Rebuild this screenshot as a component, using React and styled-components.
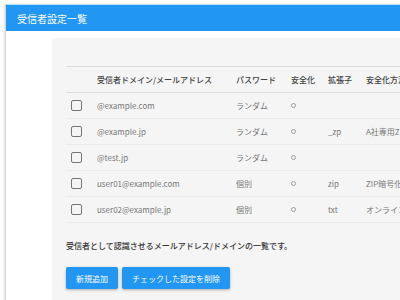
import React from 'react'
import styled, { createGlobalStyle } from 'styled-components'

const GlobalStyle = createGlobalStyle`
  html, body {
    margin: 0;
    padding: 0;
    background: #fff;
    overflow: hidden;
  }
  body {
    font-family: "Noto Sans CJK JP", "Noto Sans", sans-serif;
  }
`

const Page = styled.div`
  width: 400px;
  height: 300px;
  overflow: hidden;
  padding: 4px 0 0 5px;
  box-sizing: border-box;
`

const Panel = styled.section`
  width: 420px;
  height: 320px;
  border-left: 1px solid #d6d6d6;
  box-shadow: -1px 0 2px rgba(0, 0, 0, 0.12);
  display: flex;
  flex-direction: column;
`

const PanelHeader = styled.header`
  height: 26px;
  background: #2196f3;
  border-top: 1px solid #b3e5fc;
  color: #fff;
  font-size: 10px;
  display: flex;
  align-items: center;
  padding-left: 11px;
`

const PanelBody = styled.div`
  flex: 1;
  padding: 7px 0 0 46px;
  background: #fff;
  display: flex;
`

const Content = styled.div`
  flex: 1;
  background: #f5f5f5;
  padding: 28px 0 0 14px;
`

const Table = styled.table`
  border-collapse: collapse;
  table-layout: fixed;
  width: 400px;
  font-size: 8px;
`

const HeadCell = styled.th`
  height: 25px;
  text-align: left;
  font-weight: 500;
  color: #424242;
  padding: 0 0 0 ${p => p.$pad || 8}px;
  border-top: 1px solid #dcdcdc;
  border-bottom: 1px solid #dcdcdc;
  white-space: nowrap;
  overflow: hidden;
`

const Row = styled.tr`
  border-bottom: 1px solid #ebebeb;
`

const Cell = styled.td`
  height: 25px;
  color: #757575;
  padding: 0 0 0 ${p => p.$pad || 8}px;
  white-space: nowrap;
  overflow: hidden;
`

const Circle = styled.span`
  display: block;
  width: 3px;
  height: 3px;
  border: 1px solid #9e9e9e;
  border-radius: 50%;
`

const Check = styled.span`
  display: block;
  width: 9px;
  height: 9px;
  border: 1.5px solid #757575;
  border-radius: 2px;
`

const Note = styled.p`
  margin: 17px 0 0;
  font-size: 8px;
  font-weight: 500;
  color: #333;
`

const Actions = styled.div`
  display: flex;
  gap: 4px;
  margin-top: 16px;
`

const Button = styled.button`
  height: 22px;
  padding: 0 10px;
  border: none;
  border-radius: 2px;
  background: #2196f3;
  color: #fff;
  font-family: inherit;
  font-size: 8px;
  box-shadow: 0 1px 3px rgba(0, 0, 0, 0.3);
`

const rows = [
  { addr: '@example.com', pw: 'ランダム', safe: true, ext: '', method: '' },
  { addr: '@example.jp', pw: 'ランダム', safe: true, ext: '_zp', method: 'A社専用ZIP' },
  { addr: '@test.jp', pw: 'ランダム', safe: true, ext: '', method: '' },
  { addr: 'user01@example.com', pw: '個別', safe: true, ext: 'zip', method: 'ZIP暗号化' },
  { addr: 'user02@example.jp', pw: '個別', safe: true, ext: 'txt', method: 'オンラインストレージ' },
]

export default function App() {
  return (
    <Page>
      <GlobalStyle />
      <Panel>
        <PanelHeader>受信者設定一覧</PanelHeader>
        <PanelBody>
          <Content>
            <Table>
              <colgroup>
                <col style={{ width: 23 }} />
                <col style={{ width: 139 }} />
                <col style={{ width: 55 }} />
                <col style={{ width: 37 }} />
                <col style={{ width: 38 }} />
                <col />
              </colgroup>
              <thead>
                <tr>
                  <HeadCell $pad={5}></HeadCell>
                  <HeadCell>受信者ドメイン/メールアドレス</HeadCell>
                  <HeadCell>パスワード</HeadCell>
                  <HeadCell>安全化</HeadCell>
                  <HeadCell>拡張子</HeadCell>
                  <HeadCell>安全化方法</HeadCell>
                </tr>
              </thead>
              <tbody>
                {rows.map(r => (
                  <Row key={r.addr}>
                    <Cell $pad={5}><Check /></Cell>
                    <Cell>{r.addr}</Cell>
                    <Cell>{r.pw}</Cell>
                    <Cell>{r.safe && <Circle />}</Cell>
                    <Cell>{r.ext}</Cell>
                    <Cell>{r.method}</Cell>
                  </Row>
                ))}
              </tbody>
            </Table>
            <Note>受信者として認識させるメールアドレス/ドメインの一覧です。</Note>
            <Actions>
              <Button>新規追加</Button>
              <Button>チェックした設定を削除</Button>
            </Actions>
          </Content>
        </PanelBody>
      </Panel>
    </Page>
  )
}
